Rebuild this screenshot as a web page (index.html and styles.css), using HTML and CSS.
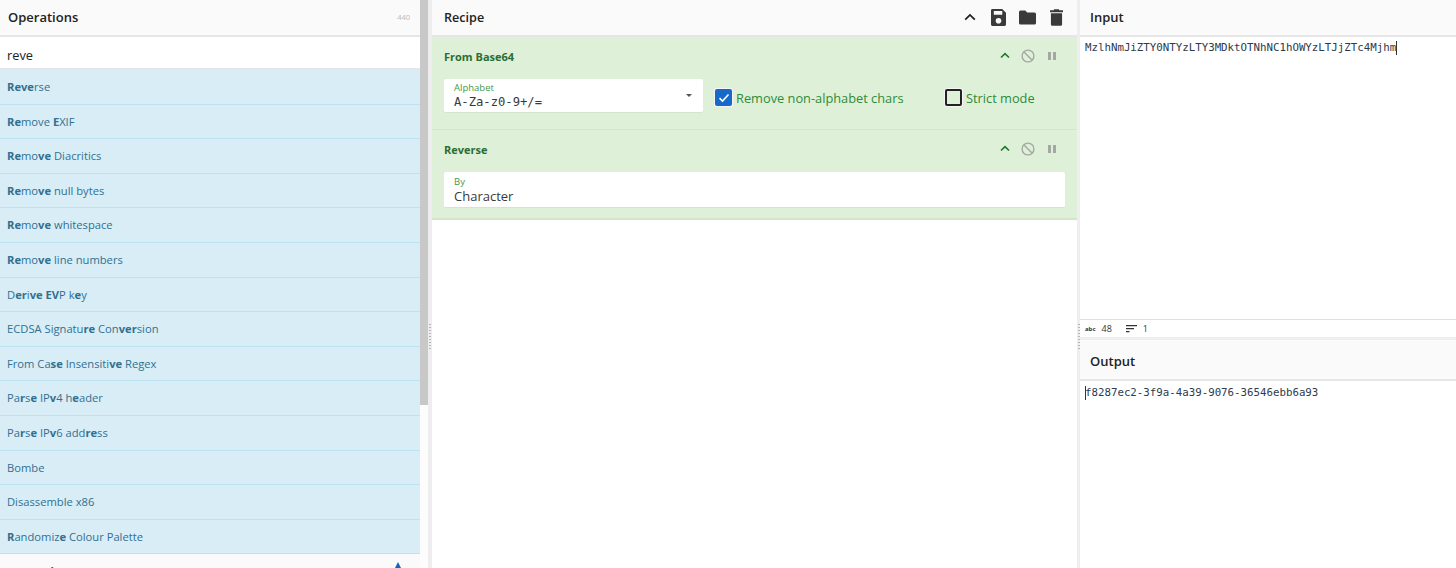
FILE: index.html
```html
<!DOCTYPE html>
<html lang="en">
<head>
<meta charset="utf-8">
<title>CyberChef</title>
<link rel="stylesheet" href="styles.css">
</head>
<body>
<div class="app">
  <section class="ops">
    <div class="ops-main">
      <header class="head"><h2>Operations</h2><span class="count">440</span></header>
      <div class="search">reve</div>
      <ul class="oplist">
        <li><b>Reve</b>rse</li>
        <li><b>Re</b>move <b>E</b>XIF</li>
        <li><b>Re</b>mo<b>ve</b> Diacritics</li>
        <li><b>Re</b>mo<b>ve</b> null bytes</li>
        <li><b>Re</b>mo<b>ve</b> whitespace</li>
        <li><b>Re</b>mo<b>ve</b> line numbers</li>
        <li>D<b>er</b>i<b>ve</b> <b>EV</b>P k<b>e</b>y</li>
        <li>ECDSA Signatu<b>re</b> Con<b>ver</b>sion</li>
        <li>From Ca<b>se</b> Insensiti<b>ve</b> Regex</li>
        <li>Pa<b>r</b>s<b>e</b> IP<b>v</b>4 h<b>e</b>ader</li>
        <li>Pa<b>r</b>s<b>e</b> IP<b>v</b>6 add<b>re</b>ss</li>
        <li>Bombe</li>
        <li>Disassemble x86</li>
        <li><b>R</b>andomiz<b>e</b> Colour Palette</li>
      </ul>
      <div class="cat"><span>Favourites</span><i class="star"></i></div>
    </div>
    <div class="scrollbar"><div class="thumb"></div></div>
  </section>
  <div class="gutter"><span class="grip"></span></div>
  <section class="recipe">
    <header class="head">
      <h2>Recipe</h2>
      <div class="tools">
        <svg class="chev-big" viewBox="0 0 12 8"><path d="M1.2 6.600 6 1.900l4.800 4.700" fill="none" stroke="#222" stroke-width="1.800"/></svg>
        <svg class="tool" viewBox="0 0 16 18"><path fill="#3a3a3a" fill-rule="evenodd" d="M1.500 0H12l4 4v12.500a1.500 1.500 0 0 1-1.500 1.500h-13A1.500 1.500 0 0 1 0 16.500v-15A1.500 1.500 0 0 1 1.500 0ZM3 2v4h9V2ZM8 9.500a3 3 0 1 0 0 6 3 3 0 0 0 0-6Z"/></svg>
        <svg class="tool wide" viewBox="0 0 18 15"><path fill="#3a3a3a" d="M1.700 0h5l2 2.200h7.600A1.700 1.700 0 0 1 18 3.900v9.400a1.700 1.700 0 0 1-1.700 1.700H1.700A1.700 1.700 0 0 1 0 13.300V1.700A1.700 1.700 0 0 1 1.700 0Z"/></svg>
        <svg class="tool" viewBox="0 0 14 18"><path fill="#3a3a3a" d="M4.500 0h5l.6 1.300H14v2H0v-2h3.900ZM1 4.500h12V16.500a1.500 1.500 0 0 1-1.500 1.500h-9A1.500 1.500 0 0 1 1 16.500Z"/></svg>
      </div>
    </header>
    <article class="step step-first">
      <div class="step-title">
        <h3>From Base64</h3>
        <div class="step-ctl">
          <svg class="chev" viewBox="0 0 10 7"><path d="M1 5.500 5 1.700l4 3.800" fill="none" stroke="#1f7a2e" stroke-width="1.700"/></svg>
          <svg class="ban" viewBox="0 0 14 14"><circle cx="7" cy="7" r="5.900" fill="none" stroke="#a3a8a3" stroke-width="1.400"/><path d="M3 3l8 8" stroke="#a3a8a3" stroke-width="1.400"/></svg>
          <span class="pause"><i></i><i></i></span>
        </div>
      </div>
      <div class="step-args">
        <div class="field field-select">
          <label>Alphabet</label>
          <div class="val mono">A-Za-z0-9+/=</div>
          <i class="caret"></i>
        </div>
        <div class="check check-1"><span class="box on"><svg viewBox="0 0 12 10"><path d="M1.500 5.200 4.500 8l6-6.500" fill="none" stroke="#fff" stroke-width="1.600"/></svg></span>Remove non-alphabet chars</div>
        <div class="check"><span class="box"></span>Strict mode</div>
      </div>
    </article>
    <article class="step step-second">
      <div class="step-title">
        <h3>Reverse</h3>
        <div class="step-ctl">
          <svg class="chev" viewBox="0 0 10 7"><path d="M1 5.500 5 1.700l4 3.800" fill="none" stroke="#1f7a2e" stroke-width="1.700"/></svg>
          <svg class="ban" viewBox="0 0 14 14"><circle cx="7" cy="7" r="5.900" fill="none" stroke="#a3a8a3" stroke-width="1.400"/><path d="M3 3l8 8" stroke="#a3a8a3" stroke-width="1.400"/></svg>
          <span class="pause"><i></i><i></i></span>
        </div>
      </div>
      <div class="step-args">
        <div class="field field-by">
          <label>By</label>
          <div class="val">Character</div>
        </div>
      </div>
    </article>
  </section>
  <div class="gutter gutter-thin"><span class="grip"></span></div>
  <section class="io">
    <div class="input-pane">
      <header class="head"><h2>Input</h2></header>
      <div class="code">MzlhNmJiZTY0NTYzLTY3MDktOTNhNC1hOWYzLTJjZTc4Mjhm<span class="cursor"></span></div>
      <footer class="status">
        <span class="stat"><span class="abc">abc</span>48</span>
        <span class="stat"><svg class="lines" viewBox="0 0 11 8"><path d="M0 .7h11M0 3.700h8M0 6.700h3.500" stroke="#333" stroke-width="1.200"/></svg>1</span>
      </footer>
    </div>
    <div class="output-pane">
      <header class="head"><h2>Output</h2></header>
      <div class="code"><span class="cursor cursor-lead"></span>f8287ec2-3f9a-4a39-9076-36546ebb6a93</div>
    </div>
  </section>
</div>
</body>
</html>
```
FILE: styles.css
```css
* { box-sizing: border-box; }
html, body { margin: 0; height: 100%; overflow: hidden; }
body { font-family: "Open Sans", "Noto Sans", sans-serif; background: #fff; color: #222; }
.app { display: flex; height: 568px; width: 1456px; overflow: hidden; }
.head { height: 37px; flex: none; display: flex; align-items: center; justify-content: space-between; background: #fafafa; border-bottom: 2px solid #e6e6e6; padding: 0 9px 1px 8px; }
h2 { margin: 0; font-size: 13px; font-weight: 600; color: #222; }
.ops { width: 428px; flex: none; display: flex; }
.ops-main { width: 420px; flex: none; display: flex; flex-direction: column; }
.count { font-size: 7.500px; color: #bbb; margin-right: 1px; }
.search { height: 33px; flex: none; background: #fff; border-bottom: 2px solid #e6e6e6; padding: 0 7px; font-size: 12.800px; line-height: 36px; color: #222; }
.oplist { list-style: none; margin: 0; padding: 0; flex: none; }
.oplist li { height: 34.600px; background: #d9edf7; border-bottom: 1px solid #bce4f0; padding-left: 7px; font-size: 11.200px; line-height: 34px; color: #31708f; }
.oplist b { font-weight: 700; }
.cat { flex: 1; background: #fafafa; display: flex; justify-content: space-between; padding: 10px 17px 0 7px; font-size: 12.500px; font-weight: 700; color: #1c4f8a; }
.star { width: 0; height: 0; border-left: 5px solid transparent; border-right: 5px solid transparent; border-bottom: 10px solid #1565c0; margin-top: -2px; }
.scrollbar { width: 8px; background: #fcfcfc; }
.thumb { height: 405px; background: #c8c8c8; }
.gutter { width: 4px; flex: none; background: #eee; position: relative; }
.gutter-thin { width: 3px; }
.grip { position: absolute; left: 1px; top: 324px; width: 2px; height: 26px; background: repeating-linear-gradient(to bottom, #b5b5b5 0 1px, transparent 1px 3px); }
.recipe { width: 645px; flex: none; display: flex; flex-direction: column; }
.recipe .head { padding-left: 12px; }
.recipe h2 { font-size: 12.600px; }
.tools { display: flex; align-items: center; margin-right: 5px; }
.chev-big { width: 12px; height: 8px; margin-right: 15px; }
.tool { width: 15px; height: 17px; margin-right: 13px; }
.tool.wide { width: 17px; height: 15px; margin-right: 14px; }
.tool:last-child { width: 13px; margin-right: 0; }
.step { background: #dff0d8; padding: 0 12px; color: #2e8b3a; }
.step-first { height: 93px; border-bottom: 1px solid #d3e5cb; }
.step-second { height: 90px; border-bottom: 2px solid #d3e5cb; }
.step-title { height: 42px; display: flex; align-items: center; justify-content: space-between; padding-bottom: 3px; }
h3 { margin: 0; font-size: 11px; font-weight: 700; color: #2a6e33; }
.step-ctl { display: flex; align-items: center; margin: 0 9px 2px 0; }
.chev { width: 10px; height: 7px; margin-right: 11px; }
.ban { width: 14px; height: 14px; margin-right: 13px; }
.pause { display: flex; gap: 2px; }
.pause i { width: 3px; height: 8px; background: #a3a8a3; }
.step-args { display: flex; align-items: flex-start; }
.field { background: #fff; border-radius: 2px; position: relative; padding: 2px 10px 0; flex: none; border-bottom: 1px solid #d3e5cb; }
.field label { display: block; font-size: 9.500px; line-height: 13px; color: #3f9a4c; }
.val { font-size: 13px; line-height: 16px; color: #3a3a3a; }
.val.mono { font-family: "DejaVu Sans Mono", monospace; font-size: 12.200px; }
.field-select { width: 259px; height: 34px; }
.field-by { width: 621px; height: 36px; padding-top: 3px; }
.caret { position: absolute; right: 11px; top: 15px; border-left: 3px solid transparent; border-right: 3px solid transparent; border-top: 3px solid #555; }
.check { display: flex; align-items: center; height: 37px; font-size: 12.800px; color: #2e8b3a; }
.check-1 { margin-left: 12px; width: 230px; }
.box { width: 17px; height: 17px; border: 2px solid #222; border-radius: 2px; margin-right: 4px; box-shadow: 0 0 0 1px #f5f5f5; flex: none; display: flex; align-items: center; justify-content: center; }
.box.on { background: #1669c9; border-color: #1669c9; }
.box svg { width: 12px; height: 10px; }
.io { flex: 1; display: flex; flex-direction: column; }
.input-pane { height: 340px; flex: none; display: flex; flex-direction: column; }
.output-pane { flex: 1; display: flex; flex-direction: column; }
.io .head { padding-left: 10px; }
.output-pane .head { height: 41px; padding-top: 2px; padding-bottom: 0; }
.output-pane .code { padding-top: 5px; }
.code { flex: 1; font-family: "DejaVu Sans Mono", monospace; font-size: 10.770px; line-height: 14px; padding: 4px 5px; color: #2d3b4e; }
.cursor { display: inline-block; width: 1px; height: 14px; background: #333; vertical-align: top; }
.cursor-lead { margin-right: -1px; }
.status { height: 21px; flex: none; border-top: 1px solid #e0e0e0; border-bottom: 3px solid #eee; display: flex; align-items: center; gap: 14px; padding-left: 5px; font-size: 9px; color: #333; }
.stat { display: flex; align-items: center; gap: 6px; }
.abc { font-size: 6px; font-weight: 700; line-height: 8px; }
.lines { width: 11px; height: 8px; }
```
